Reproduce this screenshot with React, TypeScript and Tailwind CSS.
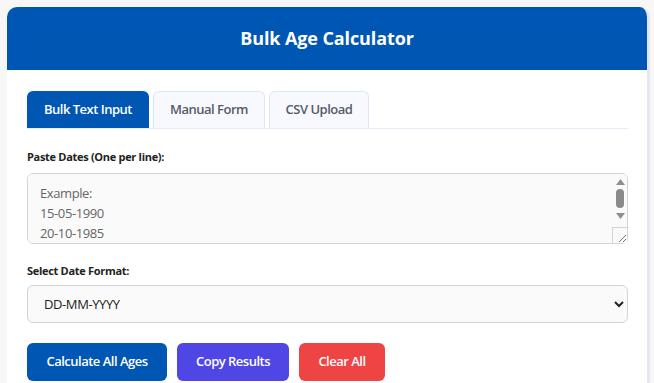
export default function App() {
  return (
    <div className="min-h-screen bg-[#f7f7f8] pt-[7px] pl-[7px] pr-[4px] font-['Open_Sans',sans-serif]">
      <div className="overflow-hidden rounded-t-[10px] border-r-[3px] border-[#e4e8f6] bg-white">
        <div className="flex h-[63px] items-center justify-center bg-[#0057b3]">
          <h1 className="text-[18px] font-bold tracking-[-0.1px] text-white">Bulk Age Calculator</h1>
        </div>

        <div className="pt-[21px] pr-[19px] pb-4 pl-5">
          {/* tabs */}
          <div className="flex gap-[4px] border-b border-[#e6ecf7]">
            <button className="h-[37px] w-[122px] rounded-t-[6px] bg-[#0057b3] text-[13px] font-semibold tracking-[-0.5px] text-white">
              Bulk Text Input
            </button>
            <button className="h-[37px] w-[112px] rounded-t-[6px] border border-b-0 border-[#dfe6f5] bg-[#f7f9ff] text-[13px] font-semibold tracking-[-0.5px] text-[#555c66]">
              Manual Form
            </button>
            <button className="h-[37px] w-[100px] rounded-t-[6px] border border-b-0 border-[#dfe6f5] bg-[#f7f9ff] text-[13px] font-semibold tracking-[-0.5px] text-[#555c66]">
              CSV Upload
            </button>
          </div>

          <label className="mt-[20px] block text-[11px] font-bold tracking-[-0.3px] text-[#222]">
            Paste Dates (One per line):
          </label>
          <div className="relative mt-[7px]">
            <textarea
              className="block h-[71px] w-full resize-y overflow-y-scroll rounded-[6px] border border-[#d4d4d8] bg-[#fafafa] px-3 pt-[9px] pb-[6px] text-[13px] leading-[20px] tracking-[-0.4px] text-[#666] outline-none"
              defaultValue={"Example:\n15-05-1990\n20-10-1985\n01-01-2000"}
            />
            {/* scrollbar */}
            <div className="pointer-events-none absolute top-[1px] right-[1px] flex h-[53px] w-[14px] flex-col items-center rounded-tr-[6px] bg-[#fafafa] pt-[5px]">
              <svg width="9" height="6" viewBox="0 0 9 6">
                <path d="M4.5 0L9 6H0z" fill="#8f8f8f" />
              </svg>
              <div className="mt-[4px] h-[19px] w-[8px] rounded-full bg-[#8a8a8a]" />
              <svg className="mt-[5px]" width="9" height="6" viewBox="0 0 9 6">
                <path d="M0 0h9L4.5 6z" fill="#8f8f8f" />
              </svg>
            </div>
            <div className="pointer-events-none absolute right-[1px] bottom-[1px] h-[16px] w-[15px] border-t border-l border-[#d4d4d8] bg-[#fafafa]">
              <svg className="absolute right-[1px] bottom-[1px]" width="8" height="8" viewBox="0 0 8 8">
                <path d="M1 8L8 1M5 8L8 5" stroke="#777" strokeWidth="1" />
              </svg>
            </div>
          </div>

          <label className="mt-[19px] block text-[11px] font-bold tracking-[-0.3px] text-[#222]">
            Select Date Format:
          </label>
          <select className="mt-[6px] block h-[38px] w-full rounded-[6px] border border-[#d4d4d8] bg-[#fafafa] px-3 text-[13px] tracking-[-0.4px] text-[#222] outline-none">
            <option>DD-MM-YYYY</option>
            <option>MM-DD-YYYY</option>
            <option>YYYY-MM-DD</option>
          </select>

          <div className="mt-[20px] flex gap-[10px]">
            <button className="h-[38px] w-[140px] rounded-[6px] bg-[#0057b3] text-[13px] font-semibold tracking-[-0.5px] text-white">
              Calculate All Ages
            </button>
            <button className="h-[38px] w-[112px] rounded-[6px] bg-[#4f46e5] text-[13px] font-semibold tracking-[-0.5px] text-white">
              Copy Results
            </button>
            <button className="h-[38px] w-[86px] rounded-[6px] bg-[#ef4444] text-[13px] font-semibold tracking-[-0.5px] text-white">
              Clear All
            </button>
          </div>
        </div>
      </div>
    </div>
  );
}
